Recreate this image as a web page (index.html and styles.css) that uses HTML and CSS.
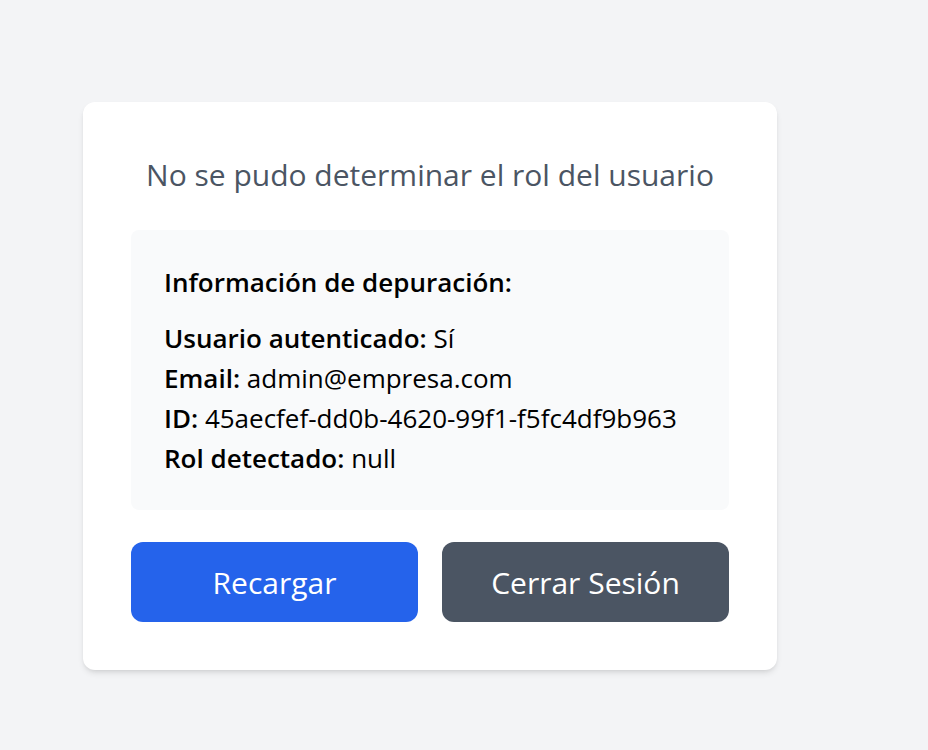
FILE: index.html
```html
<!DOCTYPE html>
<html lang="es">
<head>
<meta charset="utf-8">
<title>Error de rol</title>
<link rel="stylesheet" href="styles.css">
</head>
<body>
  <main class="page">
    <section class="card">
      <p class="title">No se pudo determinar el rol del usuario</p>
      <div class="debug">
        <h3 class="debug-heading">Información de depuración:</h3>
        <p class="debug-line"><strong>Usuario autenticado:</strong> Sí</p>
        <p class="debug-line"><strong>Email:</strong> admin@empresa.com</p>
        <p class="debug-line"><strong>ID:</strong> 45aecfef-dd0b-4620-99f1-f5fc4df9b963</p>
        <p class="debug-line"><strong>Rol detectado:</strong> null</p>
      </div>
      <div class="actions">
        <button class="btn btn-primary" type="button">Recargar</button>
        <button class="btn btn-secondary" type="button">Cerrar Sesión</button>
      </div>
    </section>
  </main>
</body>
</html>
```

FILE: styles.css
```css
* { box-sizing: border-box; }

html, body {
  margin: 0;
  padding: 0;
  background: #f3f4f6;
  font-family: "Open Sans", "Noto Sans", sans-serif;
}

.page {
  min-height: 750px;
  padding: 102px 0 0 83px;
}

.card {
  width: 694px;
  background: #ffffff;
  border-radius: 12px;
  padding: 48px;
  box-shadow: 0 4px 6px -1px rgba(0,0,0,0.1), 0 2px 4px -2px rgba(0,0,0,0.1);
}

.title {
  margin: 0 0 30px;
  font-size: 30px;
  line-height: 50px;
  color: #4b5563;
  text-align: center;
  white-space: nowrap;
}

.debug {
  background: #f9fafb;
  border-radius: 8px;
  padding: 32px 32px 32px 33px;
  margin-bottom: 32px;
  color: #000;
}

.debug-heading {
  margin: 0 0 16px;
  font-size: 26px;
  line-height: 40px;
  font-weight: 600;
}

.debug-line {
  margin: 0;
  font-size: 26px;
  line-height: 40px;
  white-space: nowrap;
}

.debug-line strong { font-weight: 600; }

.actions {
  display: flex;
  gap: 24px;
}

.btn {
  flex: 1;
  height: 80px;
  border: none;
  border-radius: 12px;
  color: #ffffff;
  font-family: inherit;
  font-size: 30px;
  cursor: pointer;
}

.btn-primary { background: #2563eb; }
.btn-secondary { background: #4b5563; }
```
